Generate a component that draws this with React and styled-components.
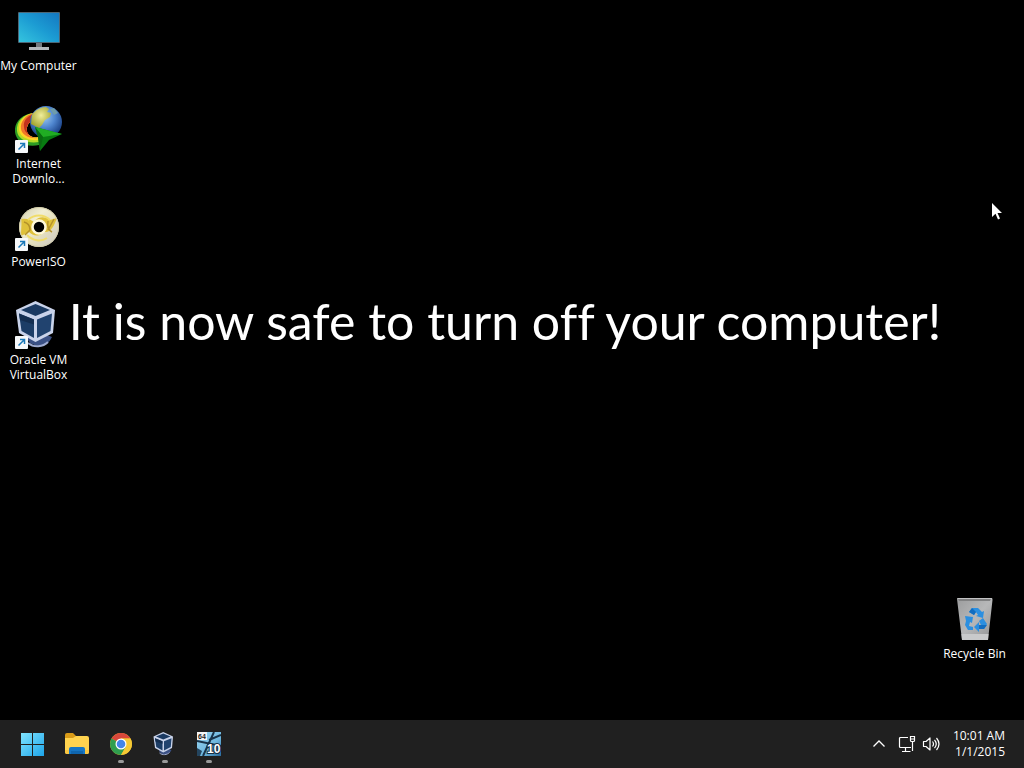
import React from "react";
import styled, { createGlobalStyle } from "styled-components";

const GlobalStyle = createGlobalStyle`
  body {
    margin: 0;
    background: #000;
    color: #fff;
    font-family: "Open Sans", "Noto Sans", sans-serif;
  }

  button {
    border: 0;
    padding: 0;
    background: none;
    color: inherit;
    font: inherit;
  }
`;

const Screen = styled.div`
  display: flex;
  flex-direction: column;
  height: 100vh;
  position: relative;
  overflow: hidden;
`;

const Desktop = styled.main`
  flex: 1;
  display: grid;
  grid-template-columns: 100%;
  min-height: 0;
`;

const Wallpaper = styled.div`
  grid-area: 1 / 1;
  display: flex;
  justify-content: center;
  align-items: center;
  padding: 0 14px 78px 0;
`;

const Message = styled.h1`
  margin: 0;
  font-family: Lato, sans-serif;
  font-size: 50px;
  font-weight: 400;
  font-variant-ligatures: none;
  line-height: 60px;
  white-space: nowrap;
`;

const Shortcuts = styled.div`
  grid-area: 1 / 1;
  display: flex;
  justify-content: space-between;
  padding-right: 11px;
`;

const IconColumn = styled.div`
  display: flex;
  flex-direction: column;
  width: 77px;
  justify-content: ${({ $bottom }) => ($bottom ? "flex-end" : "flex-start")};
  padding-bottom: ${({ $bottom }) => ($bottom ? "34px" : "0")};
`;

const Shortcut = styled.button`
  display: flex;
  flex-direction: column;
  align-items: center;
  gap: 3px;
  height: 98px;
  padding-top: 7px;

  svg {
    flex: none;
  }
`;

const ShortcutName = styled.span`
  font-size: 12px;
  line-height: 15px;
  text-align: center;
`;

const Taskbar = styled.footer`
  display: flex;
  justify-content: space-between;
  height: 48px;
  background: #202020;
`;

const Apps = styled.nav`
  display: flex;
  padding-left: 11px;
`;

const AppButton = styled.button`
  display: grid;
  place-items: center;
  width: 44px;
  position: relative;

  &::after {
    content: "";
    display: ${({ $running }) => ($running ? "block" : "none")};
    position: absolute;
    bottom: 5px;
    width: 6px;
    height: 3px;
    border-radius: 2px;
    background: #9a9a9a;
  }
`;

const Tray = styled.div`
  display: flex;
  align-items: center;
  padding-right: 19px;
`;

const TrayButton = styled.button`
  display: grid;
  place-items: center;
  width: 24px;
  height: 40px;
  margin-right: ${({ $gap }) => $gap || 0}px;
`;

const Clock = styled.button`
  display: flex;
  flex-direction: column;
  align-items: flex-end;
  font-size: 12px;
  line-height: 16px;
`;

const TileText = styled.text`
  font-family: "Liberation Sans", sans-serif;
  font-size: ${({ $size }) => $size}px;
  font-weight: 700;
`;

const Pointer = styled.svg`
  position: absolute;
  left: 991px;
  top: 202px;
`;

const ShortcutArrow = () => (
  <g>
    <rect x="0" y="35" width="13" height="13" rx="1" fill="#f6f8fa" />
    <path
      d="M3.500 44.500 9 39M5 38.500h4.500V43"
      fill="none"
      stroke="#1b78b8"
      strokeWidth="1.500"
    />
  </g>
);

const ComputerIcon = () => (
  <svg width="48" height="48" viewBox="0 0 48 48">
    <defs>
      <linearGradient id="screen" x1="1" y1="0" x2="0" y2="1">
        <stop offset="0" stopColor="#1478c2" />
        <stop offset="0.5" stopColor="#1c9cd3" />
        <stop offset="1" stopColor="#35c4de" />
      </linearGradient>
    </defs>
    <path d="M21 36h6v5h-6z" fill="#74797d" />
    <path d="M14 40h20v3H14z" fill="#b4b8bb" />
    <rect x="3" y="5" width="42" height="31" rx="1" fill="#4d6675" />
    <rect x="4" y="6" width="40" height="29" fill="url(#screen)" />
  </svg>
);

const DownloadManagerIcon = () => (
  <svg width="48" height="48" viewBox="0 0 48 48">
    <defs>
      <radialGradient id="globe" cx="0.45" cy="0.35" r="0.65">
        <stop offset="0" stopColor="#9cc8f0" />
        <stop offset="0.5" stopColor="#4f86cf" />
        <stop offset="1" stopColor="#173c80" />
      </radialGradient>
      <radialGradient id="land" cx="0.5" cy="0.4" r="0.6">
        <stop offset="0" stopColor="#f0ee9c" />
        <stop offset="1" stopColor="#a3a42f" />
      </radialGradient>
    </defs>
    <path d="M19 8C6 9-1 18 0 27c1 9 10 16 24 13l1-8C16 34 10 29 12 22c1-4 4-6 8-8z" fill="#2c9d24" />
    <path d="M19 8C8 9 1 17 2 26c1 8 10 13 22 11l1-5C16 34 10 29 12 22c1-4 4-6 8-8z" fill="#b4dd28" />
    <path d="M19 8C9 9 3 17 4 25c1 7 9 11 20 10l1-3C16 34 10 29 12 22c1-4 4-6 8-8z" fill="#ffd427" />
    <path d="M19 8C10 10 5 17 6 24c1 6 8 10 18 9-9 0-14-5-12-11 1-4 4-6 8-8z" fill="#f0782a" />
    <path d="M19 9C12 11 8 16 9 22c0 3 2 6 5 8-2-3-3-6-2-8 1-4 4-6 8-8z" fill="#c2321e" />
    <circle cx="31" cy="17" r="16" fill="url(#globe)" />
    <path
      d="M17 10c3-5 9-8 14-8l3 2-2 3 4 1-1 4-5 3-3 5-3 3-8-4z"
      fill="url(#land)"
    />
    <path d="M35 4l4-1 4 5-4 2z" fill="#6f9cab" />
    <path d="M20 22 47 29 34 35 25 46 23 32z" fill="#087c11" />
    <path d="M20 22 47 29 28 32z" fill="#20ad23" />
    <path d="M20 22 28 32 25 46 23 32z" fill="#0a6a10" />
    <ShortcutArrow />
  </svg>
);

const PowerIsoIcon = () => (
  <svg width="48" height="48" viewBox="0 0 48 48">
    <defs>
      <linearGradient id="disc" x1="0" y1="0" x2="1" y2="1">
        <stop offset="0" stopColor="#d0cdae" />
        <stop offset="0.35" stopColor="#f1eed3" />
        <stop offset="0.6" stopColor="#e6e0be" />
        <stop offset="1" stopColor="#c8c6c8" />
      </linearGradient>
    </defs>
    <circle cx="24" cy="24" r="20" fill="url(#disc)" />
    <path d="M6 16c7-1 10 1 13 3 5-7 12-5 16-2l7-2c-3 8-6 15-13 14-5 6-12 3-15 0l-8 4c0-8 1-13 0-17z" fill="#dfc13b" />
    <path d="M9 19c4 1 6 4 6 8l-5 5M33 18c-1 6 0 9 4 11M39 16l-6 11" fill="none" stroke="#b4922a" strokeWidth="1.500" />
    <path d="M13 17c6-6 16-6 22 0M12 32c6 6 14 7 20 3" fill="none" stroke="#f0dc6a" strokeWidth="2" />
    <circle cx="24" cy="24" r="6.500" fill="#000" stroke="#fff9d9" strokeWidth="2.500" />
    <circle cx="24" cy="24" r="19.500" fill="none" stroke="#d2cca8" />
    <ShortcutArrow />
  </svg>
);

const Cube = () => (
  <g>
    <path d="M12 37c3 10 20 11 25-1l-5-2H15z" fill="#3b5185" />
    <path d="M13 42c6 5 15 4 20-1" fill="none" stroke="#9eabd0" strokeWidth="2" />
    <path d="M20.500 0 40 9l-2 23-17.500 9L4 32 1 9z" fill="#c9d3ea" />
    <path d="M20.500 3 35 9l-14.500 6L6 9z" fill="#1b3a62" />
    <path d="M4 12.500l15 6V37L6.500 30z" fill="#1c3d66" />
    <path d="M37 12.500l-15 6V37L35.500 30z" fill="#21436f" />
    <path d="M4 12.500l15 6v5L5 19z" fill="#142e50" />
  </g>
);

const VirtualBoxIcon = () => (
  <svg width="48" height="48" viewBox="0 0 48 48">
    <Cube />
    <ShortcutArrow />
  </svg>
);

const RecycleBinIcon = () => (
  <svg width="48" height="48" viewBox="0 0 48 48">
    <defs>
      <linearGradient id="bin" x1="0" y1="0" x2="1" y2="1">
        <stop offset="0" stopColor="#9b9c9d" />
        <stop offset="0.5" stopColor="#b7b8b9" />
        <stop offset="1" stopColor="#929394" />
      </linearGradient>
    </defs>
    <path d="M6 4q0-1 1-1h33q2 0 1.500 2L37 45H11z" fill="url(#bin)" />
    <path d="M7 4h33l-1 2H8z" fill="#808182" />
    <path d="M10.500 39h27L37 45H11z" fill="#c9cacb" />
    <path d="M6.500 3.500h34.500" stroke="#c2c3c4" />
    <g fill="#2b8fe0">
      <path d="M18 17l3-4h6l4 4 2-1-1 7-7-2 2-1-2-3-2 3z" />
      <path d="M14 21l8 1-1 6-2-1-1 4 4 1v3h-5l-3-5 1-4z" />
      <path d="M32 23l4 6-3 5h-5v3l-5-5 5-5v3h2l-2-4z" />
    </g>
    <path d="m18 17 3-4 4 4-2 3zM28 30h8l-3 4h-5z" fill="#126dc0" />
  </svg>
);

const StartIcon = () => (
  <svg width="24" height="24" viewBox="0 0 24 24">
    <defs>
      <linearGradient id="start" gradientUnits="userSpaceOnUse" x1="0" y1="0" x2="24" y2="24">
        <stop offset="0" stopColor="#82e5ff" />
        <stop offset="1" stopColor="#1ba3e9" />
      </linearGradient>
    </defs>
    <path d="M0 1h11v11H0zM12 1h11v11H12zM0 13h11v11H0zM12 13h11v11H12z" fill="url(#start)" />
  </svg>
);

const FolderIcon = () => (
  <svg width="24" height="24" viewBox="0 0 24 24">
    <path d="M0 3q0-2 2-2h6l3 3v4H0z" fill="#d99b18" />
    <path d="M0 6h8l3-2h11q2 0 2 2v14q0 2-2 2H2q-2 0-2-2z" fill="#ffd34f" />
    <path d="M0 18h24v2q0 2-2 2H2q-2 0-2-2z" fill="#f9c540" />
    <path d="M4 22v-5q0-2 2-2h12q2 0 2 2v5z" fill="#1676c5" />
    <path d="M6 19h12v3H6z" fill="#0f65ae" />
  </svg>
);

const ChromeIcon = () => (
  <svg width="24" height="24" viewBox="0 0 24 24">
    <circle cx="12" cy="12" r="11" fill="#e8b929" />
    <path d="M12 12 2.500 6.500A11 11 0 0 1 21.500 6.500H12z" fill="#d8473b" />
    <path d="M12 12 2.500 6.500A11 11 0 0 0 12 23l5-8.500z" fill="#2f9e4f" />
    <path d="M12 6.500h9.500A11 11 0 0 1 12 23l4.800-8.300z" fill="#f5c934" />
    <circle cx="12" cy="12" r="5.500" fill="#fff" />
    <circle cx="12" cy="12" r="4.300" fill="#4285e8" />
  </svg>
);

const SmallVirtualBoxIcon = () => (
  <svg width="24" height="24" viewBox="0 0 48 48">
    <Cube />
  </svg>
);

const OptimizerIcon = () => (
  <svg width="24" height="24" viewBox="0 0 24 24">
    <defs>
      <linearGradient id="tiles" x1="0" y1="0" x2="1" y2="1">
        <stop offset="0" stopColor="#9fd8f2" />
        <stop offset="0.6" stopColor="#6db6de" />
        <stop offset="1" stopColor="#2a6a9a" />
      </linearGradient>
    </defs>
    <rect width="24" height="24" fill="url(#tiles)" />
    <path d="M0 16l5 3-2 5H0z" fill="#24455f" />
    <path d="M17 0 6 24M0 9l24 5M12 8l12-5" stroke="#18334a" strokeWidth="2" />
    <rect width="10" height="8" fill="#f4f4f4" />
    <TileText x="1" y="7" $size={7} fill="#222">
      64
    </TileText>
    <TileText
      x="10"
      y="21"
      $size={12}
      fill="#fff"
      stroke="#143047"
      strokeWidth="2"
      paintOrder="stroke"
    >
      10
    </TileText>
  </svg>
);

const ChevronIcon = () => (
  <svg width="16" height="16" viewBox="0 0 16 16" fill="none" stroke="#fff" strokeWidth="1.300">
    <path d="m2.500 10.500 5.500-5.500 5.500 5.500" />
  </svg>
);

const NetworkIcon = () => (
  <svg width="18" height="18" viewBox="0 0 18 18" fill="none" stroke="#fff" strokeWidth="1.200">
    <path d="M10 2.500H2.500q-1 0-1 1v8q0 1 1 1H13M7.500 12.500v3.500M4 16.500h8.500" />
    <path d="M12.500 1.500h4v4q0 1-1 1h-2q-1 0-1-1zM12.500 4h4M14.500 6.500V16" />
  </svg>
);

const SpeakerIcon = () => (
  <svg width="18" height="18" viewBox="0 0 18 18" fill="none" stroke="#fff" strokeWidth="1.200">
    <path d="M1.500 6.500h2.500l4-3.500v12l-4-3.500H1.500z" strokeLinejoin="round" />
    <path d="M10.500 6.500q2 2.500 0 5M12.500 4.800q3.500 4.200 0 8.400M14.500 3q5 6 0 12" />
  </svg>
);

const shortcuts = [
  { name: "My Computer", Icon: ComputerIcon },
  { name: "Internet Downlo...", Icon: DownloadManagerIcon },
  { name: "PowerISO", Icon: PowerIsoIcon },
  { name: "Oracle VM VirtualBox", Icon: VirtualBoxIcon },
];

const apps = [
  { name: "Start", Icon: StartIcon },
  { name: "File Explorer", Icon: FolderIcon },
  { name: "Google Chrome", Icon: ChromeIcon, running: true },
  { name: "Oracle VM VirtualBox", Icon: SmallVirtualBoxIcon, running: true },
  { name: "System utility", Icon: OptimizerIcon, running: true },
];

const App = () => (
  <Screen>
    <GlobalStyle />
    <Desktop>
      <Wallpaper>
        <Message>It is now safe to turn off your computer!</Message>
      </Wallpaper>
      <Shortcuts>
        <IconColumn>
          {shortcuts.map(({ name, Icon }) => (
            <Shortcut key={name}>
              <Icon />
              <ShortcutName>{name}</ShortcutName>
            </Shortcut>
          ))}
        </IconColumn>
        <IconColumn $bottom>
          <Shortcut>
            <RecycleBinIcon />
            <ShortcutName>Recycle Bin</ShortcutName>
          </Shortcut>
        </IconColumn>
      </Shortcuts>
    </Desktop>
    <Taskbar>
      <Apps>
        {apps.map(({ name, Icon, running }) => (
          <AppButton key={name} aria-label={name} $running={running}>
            <Icon />
          </AppButton>
        ))}
      </Apps>
      <Tray>
        <TrayButton aria-label="Show hidden icons" $gap={4}>
          <ChevronIcon />
        </TrayButton>
        <TrayButton aria-label="Network">
          <NetworkIcon />
        </TrayButton>
        <TrayButton aria-label="Volume" $gap={10}>
          <SpeakerIcon />
        </TrayButton>
        <Clock>
          <span>10:01 AM</span>
          <span>1/1/2015</span>
        </Clock>
      </Tray>
    </Taskbar>
    <Pointer width="13" height="19" viewBox="0 0 13 19" aria-hidden="true">
      <path d="M1 1v14l3.500-3.300L7 17.500l2-1-2.500-5.500H11z" fill="#fff" />
    </Pointer>
  </Screen>
);

export default App;
